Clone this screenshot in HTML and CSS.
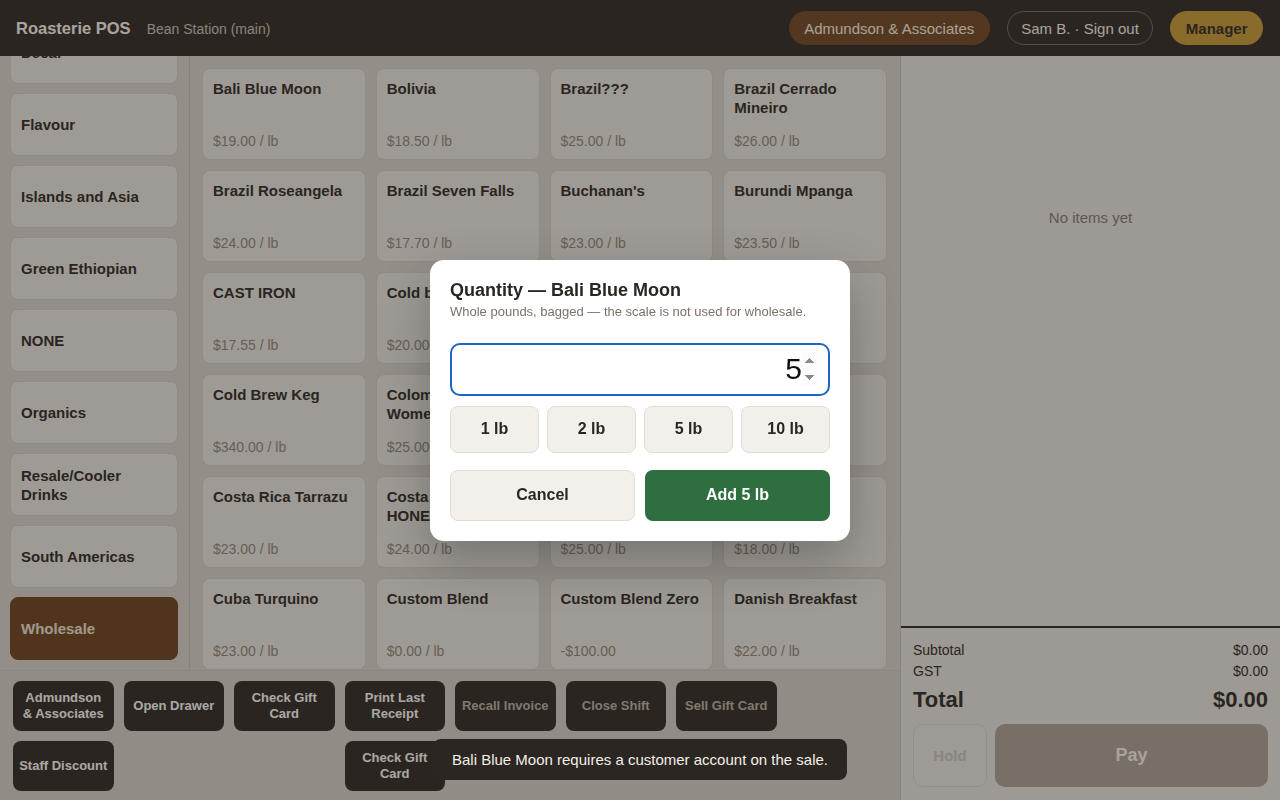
FILE: index.html
```html
<!DOCTYPE html>
<html lang="en">
<head>
    <meta charset="UTF-8">
    <meta name="viewport" content="width=device-width, initial-scale=1.0">
    <title>Roasterie POS - Bean Station</title>
    <link rel="stylesheet" href="styles.css">
</head>
<body>
    <header class="topbar">
        <div class="brand">
            <span class="brand-name">Roasterie POS</span>
            <span class="brand-store">Bean Station (main)</span>
        </div>
        <div class="topbar-actions">
            <button class="pill pill-customer">Admundson &amp; Associates</button>
            <button class="pill pill-user">Sam B. · Sign out</button>
            <button class="pill pill-manager">Manager</button>
        </div>
    </header>

    <div class="workspace">
        <section class="register">
            <!-- Category list, scrolled so the active one stays in view -->
            <nav class="categories" id="categories">
                <button class="cat">Africa</button>
                <button class="cat">Blends</button>
                <button class="cat">Decaf</button>
                <button class="cat">Flavour</button>
                <button class="cat">Islands and Asia</button>
                <button class="cat">Green Ethiopian</button>
                <button class="cat">NONE</button>
                <button class="cat">Organics</button>
                <button class="cat">Resale/Cooler Drinks</button>
                <button class="cat">South Americas</button>
                <button class="cat active">Wholesale</button>
            </nav>

            <div class="products">
                <button class="product"><span class="product-name">Bali Blue Moon</span><span class="product-price">$19.00 / lb</span></button>
                <button class="product"><span class="product-name">Bolivia</span><span class="product-price">$18.50 / lb</span></button>
                <button class="product"><span class="product-name">Brazil???</span><span class="product-price">$25.00 / lb</span></button>
                <button class="product"><span class="product-name">Brazil Cerrado Mineiro</span><span class="product-price">$26.00 / lb</span></button>

                <button class="product"><span class="product-name">Brazil Roseangela</span><span class="product-price">$24.00 / lb</span></button>
                <button class="product"><span class="product-name">Brazil Seven Falls</span><span class="product-price">$17.70 / lb</span></button>
                <button class="product"><span class="product-name">Buchanan's</span><span class="product-price">$23.00 / lb</span></button>
                <button class="product"><span class="product-name">Burundi Mpanga</span><span class="product-price">$23.50 / lb</span></button>

                <button class="product"><span class="product-name">CAST IRON</span><span class="product-price">$17.55 / lb</span></button>
                <button class="product"><span class="product-name">Cold brew Blend</span><span class="product-price">$20.00 / lb</span></button>
                <button class="product"><span class="product-name">Cold Brew Coarse</span><span class="product-price">$21.00 / lb</span></button>
                <button class="product"><span class="product-name">Cold Brew Concentrate</span><span class="product-price">$16.50 / lb</span></button>

                <button class="product"><span class="product-name">Cold Brew Keg</span><span class="product-price">$340.00 / lb</span></button>
                <button class="product"><span class="product-name">Colombian Women's Coffee</span><span class="product-price">$25.00 / lb</span></button>
                <button class="product"><span class="product-name">Congo Kivu</span><span class="product-price">$24.50 / lb</span></button>
                <button class="product"><span class="product-name">Costa Rica Candelilla</span><span class="product-price">$22.00 / lb</span></button>

                <button class="product"><span class="product-name">Costa Rica Tarrazu</span><span class="product-price">$23.00 / lb</span></button>
                <button class="product"><span class="product-name">Costa Rica Tarrazu HONEY</span><span class="product-price">$24.00 / lb</span></button>
                <button class="product"><span class="product-name">Costa Rica Volcan Azul</span><span class="product-price">$25.00 / lb</span></button>
                <button class="product"><span class="product-name">Cuba Serrano</span><span class="product-price">$18.00 / lb</span></button>

                <button class="product"><span class="product-name">Cuba Turquino</span><span class="product-price">$23.00 / lb</span></button>
                <button class="product"><span class="product-name">Custom Blend</span><span class="product-price">$0.00 / lb</span></button>
                <button class="product"><span class="product-name">Custom Blend Zero</span><span class="product-price">-$100.00</span></button>
                <button class="product"><span class="product-name">Danish Breakfast</span><span class="product-price">$22.00 / lb</span></button>

                <button class="product"><span class="product-name">Decaf Colombia</span><span class="product-price">$21.00 / lb</span></button>
                <button class="product"><span class="product-name">Decaf Mexico</span><span class="product-price">$21.50 / lb</span></button>
                <button class="product"><span class="product-name">Ecuador Loja</span><span class="product-price">$27.00 / lb</span></button>
                <button class="product"><span class="product-name">El Salvador</span><span class="product-price">$19.50 / lb</span></button>
            </div>

            <!-- Quick keys: 8 x 2 slots, empty slots stay blank -->
            <div class="toolbar">
                <button class="tool">Admundson &amp; Associates</button>
                <button class="tool">Open Drawer</button>
                <button class="tool">Check Gift Card</button>
                <button class="tool">Print Last Receipt</button>
                <button class="tool" disabled>Recall Invoice</button>
                <button class="tool" disabled>Close Shift</button>
                <button class="tool" disabled>Sell Gift Card</button>
                <div class="tool-slot"></div>

                <button class="tool">Staff Discount</button>
                <div class="tool-slot"></div>
                <div class="tool-slot"></div>
                <button class="tool">Check Gift Card</button>
                <div class="tool-slot"></div>
                <div class="tool-slot"></div>
                <div class="tool-slot"></div>
                <div class="tool-slot"></div>
            </div>
        </section>

        <aside class="cart">
            <div class="cart-lines">
                <p class="cart-empty">No items yet</p>
            </div>
            <div class="cart-totals">
                <div class="total-row"><span>Subtotal</span><span>$0.00</span></div>
                <div class="total-row"><span>GST</span><span>$0.00</span></div>
                <div class="total-row grand"><span>Total</span><span>$0.00</span></div>
                <div class="cart-actions">
                    <button class="btn-hold" disabled>Hold</button>
                    <button class="btn-pay" disabled>Pay</button>
                </div>
            </div>
        </aside>
    </div>

    <div class="backdrop">
        <div class="modal">
            <h2 class="modal-title">Quantity — Bali Blue Moon</h2>
            <p class="modal-note">Whole pounds, bagged — the scale is not used for wholesale.</p>
            <input class="qty-input" type="number" min="1" step="1" value="5" autofocus>
            <div class="quick-row">
                <button class="quick">1 lb</button>
                <button class="quick">2 lb</button>
                <button class="quick">5 lb</button>
                <button class="quick">10 lb</button>
            </div>
            <div class="modal-actions">
                <button class="btn-cancel">Cancel</button>
                <button class="btn-add">Add 5 lb</button>
            </div>
        </div>
    </div>

    <div class="toast">Bali Blue Moon requires a customer account on the sale.</div>

    <script>
        // keep the selected category visible
        var cats = document.getElementById('categories');
        cats.scrollTop = cats.scrollHeight;
    </script>
</body>
</html>
```

FILE: styles.css
```css
:root {
    --espresso: #2b2621;
    --page: #d9d4cd;
    --tile: #ebe9e4;
    --tile-border: #d4cdc3;
    --line: #c6bfb5;
    --roast: #6a4019;
    --gold: #c99a33;
    --green: #2e6e3f;
    --muted: #8f8478;
}

* {
    box-sizing: border-box;
    margin: 0;
    padding: 0;
}

body {
    font-family: "Liberation Sans", Arial, sans-serif;
    background-color: var(--page);
    color: var(--espresso);
    height: 100vh;
    overflow: hidden;
    display: flex;
    flex-direction: column;
}

button {
    font: inherit;
    color: inherit;
    background: none;
    border: none;
    cursor: pointer;
}

/* Top bar */
.topbar {
    flex: none;
    height: 56px;
    display: flex;
    align-items: center;
    justify-content: space-between;
    padding: 0 17px 0 16px;
    background-color: var(--espresso);
}

.brand {
    display: flex;
    align-items: baseline;
    gap: 16px;
}

.brand-name {
    font-size: 16.5px;
    font-weight: bold;
    color: #fcf8f2;
}

.brand-store {
    font-size: 14px;
    color: #c9c3b9;
}

.topbar-actions {
    display: flex;
    gap: 17px;
}

.pill {
    height: 34px;
    padding: 0 15.5px;
    border-radius: 17px;
    font-size: 15px;
}

.pill-customer {
    background-color: #6e4420;
    color: #fcf2e4;
}

.pill-user {
    padding: 0 13.5px;
    border: 1px solid #71695f;
    color: #fcf5ed;
}

.pill-manager {
    background-color: var(--gold);
    color: var(--espresso);
    font-weight: bold;
}

/* Main area */
.workspace {
    flex: 1;
    min-height: 0;
    display: flex;
}

.register {
    width: 900px;
    flex: none;
    display: grid;
    grid-template-columns: 190px 1fr;
    grid-template-rows: minmax(0, 1fr) 130px;
}

.categories {
    display: flex;
    flex-direction: column;
    gap: 9px;
    padding: 10px 11px 10px 10px;
    border-right: 1px solid var(--line);
    overflow-y: auto;
    scrollbar-width: none;
}

.cat {
    flex: none;
    min-height: 63px;
    display: flex;
    align-items: center;
    padding: 0 10px;
    text-align: left;
    font-size: 15px;
    font-weight: bold;
    line-height: 19px;
    background-color: var(--tile);
    border: 1px solid var(--tile-border);
    border-radius: 8px;
}

.cat.active {
    background-color: var(--roast);
    border-color: var(--roast);
    color: #eee4d7;
}

.products {
    display: grid;
    grid-template-columns: repeat(4, 1fr);
    grid-auto-rows: 92px;
    gap: 10px;
    align-content: start;
    padding: 12px 13px 12px 12px;
    overflow-y: auto;
    scrollbar-width: none;
}

.product {
    display: flex;
    flex-direction: column;
    justify-content: space-between;
    align-items: flex-start;
    padding: 10px 10px 9px;
    text-align: left;
    background-color: var(--tile);
    border: 1px solid var(--tile-border);
    border-radius: 8px;
}

.product-name {
    font-size: 15px;
    font-weight: bold;
    line-height: 19px;
}

.product-price {
    font-size: 14px;
    line-height: 17px;
    color: var(--muted);
}

.toolbar {
    grid-column: 1 / -1;
    display: grid;
    grid-template-columns: repeat(8, 1fr);
    grid-template-rows: 50px 50px;
    gap: 10px;
    padding: 10px 13px 9px;
    background-color: #d5d0ca;
    border-top: 1px solid #cdc6bc;
}

.tool {
    padding: 0 6px;
    background-color: var(--espresso);
    color: #fff;
    border-radius: 8px;
    font-size: 13px;
    font-weight: bold;
    line-height: 16px;
}

.tool:disabled {
    color: #b9b1a7;
    cursor: default;
}

/* Cart */
.cart {
    flex: 1;
    display: flex;
    flex-direction: column;
    background-color: #eae7e2;
    border-left: 1px solid var(--line);
}

.cart-lines {
    flex: 1;
}

.cart-empty {
    padding-top: 152px;
    text-align: center;
    font-size: 15px;
    line-height: 20px;
    color: #807870;
}

.cart-totals {
    padding: 12px 12px 13px;
    border-top: 2px solid var(--espresso);
}

.total-row {
    display: flex;
    justify-content: space-between;
    font-size: 14px;
    line-height: 21px;
}

.total-row.grand {
    margin-top: 4px;
    font-size: 22px;
    font-weight: bold;
    line-height: 28px;
}

.cart-actions {
    display: grid;
    grid-template-columns: 74px 1fr;
    gap: 8px;
    height: 63px;
    margin-top: 10px;
}

.btn-hold {
    background-color: #ebe8e3;
    border: 1px solid #ddd6cc;
    border-radius: 10px;
    color: #c9c5be;
    font-size: 15px;
    font-weight: bold;
}

.btn-pay {
    background-color: #aca194;
    border-radius: 10px;
    color: #fcf7ee;
    font-size: 18px;
    font-weight: bold;
}

/* Quantity dialog */
.backdrop {
    position: fixed;
    inset: 0;
    display: flex;
    align-items: center;
    justify-content: center;
    background-color: rgba(43, 37, 32, 0.4);
}

.modal {
    width: 420px;
    padding: 20px;
    background-color: #fff;
    border-radius: 14px;
    box-shadow: 0 20px 50px rgba(0, 0, 0, 0.25);
}

.modal-title {
    font-size: 18px;
    line-height: 21px;
}

.modal-note {
    margin-top: 3px;
    font-size: 13px;
    line-height: 16px;
    color: #7b7169;
}

.qty-input {
    display: block;
    width: 100%;
    height: 53px;
    margin-top: 23px;
    padding: 10px 11px;
    border: 2px solid #1f63c6;
    border-radius: 10px;
    outline: none;
    font-family: inherit;
    font-size: 30px;
    color: #111;
    text-align: right;
}

.qty-input::-webkit-inner-spin-button {
    opacity: 1;
    background-color: #f0f0f0;
}

.quick-row {
    display: grid;
    grid-template-columns: repeat(4, 1fr);
    gap: 8px;
    margin-top: 10px;
}

.quick,
.btn-cancel {
    background-color: #f3f0eb;
    border: 1px solid #e2dcd2;
    border-radius: 8px;
    font-size: 16px;
    font-weight: bold;
}

.quick {
    height: 47px;
}

.modal-actions {
    display: grid;
    grid-template-columns: 1fr 1fr;
    gap: 10px;
    margin-top: 17px;
}

.btn-cancel,
.btn-add {
    height: 51px;
}

.btn-add {
    background-color: var(--green);
    color: #fff;
    border-radius: 8px;
    font-size: 16px;
    font-weight: bold;
}

.toast {
    position: fixed;
    left: 50%;
    bottom: 20px;
    transform: translateX(-50%);
    padding: 11px 19px;
    background-color: var(--espresso);
    color: #f3efe9;
    border-radius: 8px;
    font-size: 15px;
    line-height: 19px;
    white-space: nowrap;
}
```
